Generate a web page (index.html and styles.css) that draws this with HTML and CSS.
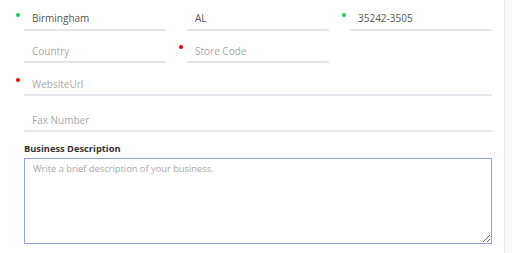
FILE: index.html
```html
<!DOCTYPE html>
<html lang="en">
<head>
    <meta charset="UTF-8" />
    <meta name="viewport" content="width=device-width, initial-scale=1.0" />
    <title>Business Details</title>
    <link rel="stylesheet" href="styles.css">
</head>
<body>
    <main class="page">
        <form class="form">
            <div class="row row-3">
                <div class="field ok"><input type="text" value="Birmingham"></div>
                <div class="field"><input type="text" value="AL"></div>
                <div class="field ok"><input type="text" value="35242-3505"></div>
            </div>
            <div class="row row-3 second">
                <div class="field"><input type="text" placeholder="Country"></div>
                <div class="field bad"><input type="text" placeholder="Store Code"></div>
            </div>
            <div class="row third">
                <div class="field bad"><input type="url" placeholder="WebsiteUrl"></div>
            </div>
            <div class="row fourth">
                <div class="field"><input type="text" placeholder="Fax Number"></div>
            </div>
            <label class="label" for="desc">Business Description</label>
            <textarea id="desc" placeholder="Write a brief description of your business."></textarea>
        </form>
    </main>
    <aside class="side"></aside>
</body>
</html>
```

FILE: styles.css
```css
html, body {
    margin: 0;
    height: 100%;
}
body {
    display: flex;
    font-family: "Open Sans", "Liberation Sans", sans-serif;
    background: #fff;
    overflow: hidden;
}
.page {
    width: 504px;
    padding: 0 12px 0 24px;
    box-sizing: border-box;
}
.side {
    flex: 1;
    border-left: 1px solid #e6e6e6;
    background: #f9f9f9;
}
.form {
    display: flex;
    flex-direction: column;
    width: 468px;
}
.row {
    display: grid;
    grid-template-columns: 1fr;
}
.row-3 {
    grid-template-columns: repeat(3, 142px);
    column-gap: 21px;
}
.second {
    margin-top: 1px;
}
.third {
    margin-top: 2px;
}
.fourth {
    margin-top: 5px;
}
.field {
    position: relative;
    border-bottom: 2px solid #e6e6ee;
}
.field.ok::before,
.field.bad::before {
    content: "";
    position: absolute;
    left: -8px;
    top: 13px;
    width: 4px;
    height: 4px;
    border-radius: 50%;
}
.field.ok::before {
    background: #1ec86a;
}
.field.bad::before {
    background: #e60000;
}
input {
    display: block;
    width: 100%;
    box-sizing: border-box;
    height: 29px;
    padding: 11px 8px 4px;
    border: none;
    outline: none;
    font: inherit;
    font-size: 10px;
    line-height: 14px;
    color: #555;
    background: transparent;
}
input:placeholder-shown {
    padding-top: 12px;
    padding-bottom: 3px;
}
input::placeholder,
textarea::placeholder {
    color: #aaa;
}
.label {
    margin-top: 10px;
    margin-bottom: 2px;
    font-size: 9.3px;
    line-height: 14px;
    font-weight: 700;
    color: #333;
}
textarea {
    display: block;
    width: 468px;
    height: 86px;
    box-sizing: border-box;
    padding: 3px 8px;
    border: 1px solid #8fa6e6;
    border-radius: 0;
    outline: none;
    font: inherit;
    font-size: 9.3px;
    line-height: 14px;
    color: #555;
}
```
